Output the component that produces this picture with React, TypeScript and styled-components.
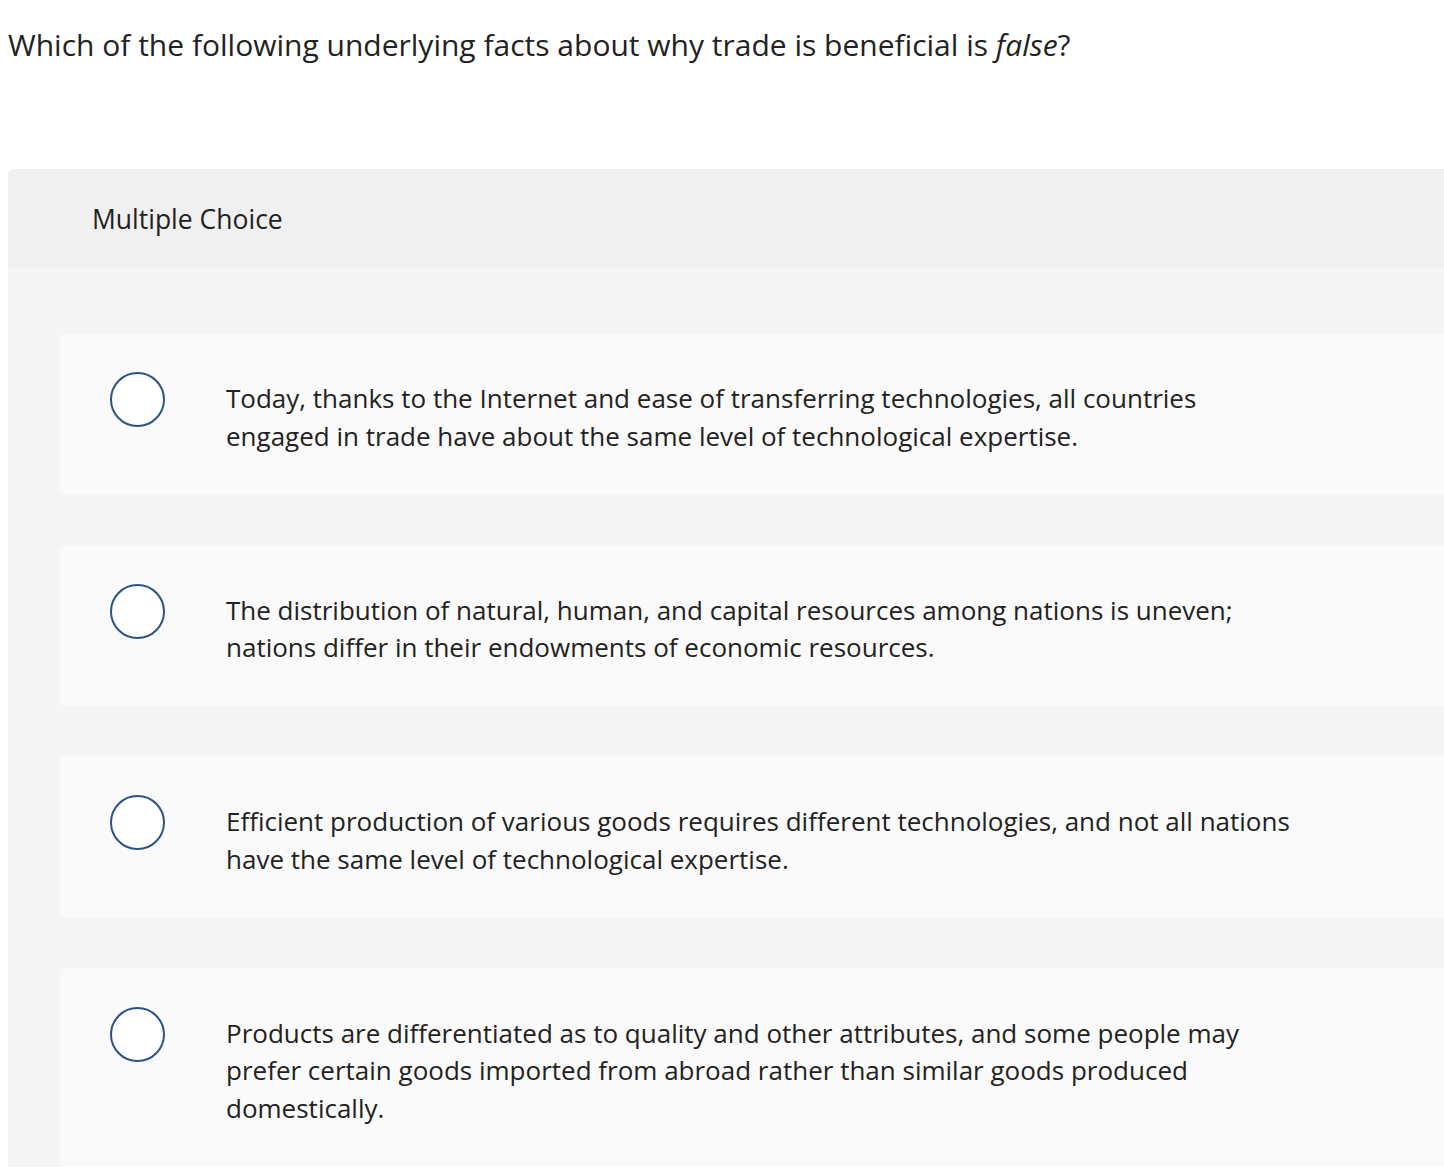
import React from 'react';
import styled, { createGlobalStyle } from 'styled-components';

const GlobalStyle = createGlobalStyle`
  html, body {
    margin: 0;
    padding: 0;
    background: #ffffff;
  }
  body {
    padding-left: 8px;
    font-family: "Open Sans", Lato, Arial, sans-serif;
    color: #222222;
    overflow-x: hidden;
  }
`;

const Question = styled.h1`
  margin: 0;
  padding-top: 26px;
  height: 169px;
  box-sizing: border-box;
  font-size: 30px;
  line-height: 38px;
  font-weight: 400;
  color: #222222;

  em {
    font-style: italic;
  }
`;

const Panel = styled.section`
  background: #f5f5f5;
  border-top-left-radius: 6px;
  overflow: hidden;
`;

const PanelHeader = styled.div`
  background: #f0f0f0;
  height: 99px;
  display: flex;
  align-items: center;
  padding-left: 84px;
  font-size: 26.5px;
  color: #222222;
`;

const OptionList = styled.div`
  display: flex;
  flex-direction: column;
  gap: 50px;
  padding: 65px 0 0 52px;
`;

const OptionCard = styled.label`
  display: flex;
  align-items: flex-start;
  background: #fafafa;
  border-radius: 5px 0 0 5px;
  padding: 39px 50px 39.5px;
  cursor: pointer;
`;

const Radio = styled.span`
  flex: none;
  width: 55px;
  height: 55px;
  box-sizing: border-box;
  border-radius: 50%;
  border: 2px solid #2b5386;
  background: #ffffff;
`;

const OptionText = styled.div`
  margin-left: 61px;
  margin-top: 8px;
  max-width: 1076px;
  font-size: 26px;
  line-height: 37.5px;
  color: #222222;
`;

const options = [
  'Today, thanks to the Internet and ease of transferring technologies, all countries engaged in trade have about the same level of technological expertise.',
  'The distribution of natural, human, and capital resources among nations is uneven; nations differ in their endowments of economic resources.',
  'Efficient production of various goods requires different technologies, and not all nations have the same level of technological expertise.',
  'Products are differentiated as to quality and other attributes, and some people may prefer certain goods imported from abroad rather than similar goods produced domestically.',
];

const App: React.FC = () => {
  return (
    <>
      <GlobalStyle />
      <Question>
        Which of the following underlying facts about why trade is beneficial is <em>false</em>?
      </Question>
      <Panel>
        <PanelHeader>Multiple Choice</PanelHeader>
        <OptionList>
          {options.map((text) => (
            <OptionCard key={text}>
              <Radio />
              <OptionText>{text}</OptionText>
            </OptionCard>
          ))}
        </OptionList>
      </Panel>
    </>
  );
};

export default App;
